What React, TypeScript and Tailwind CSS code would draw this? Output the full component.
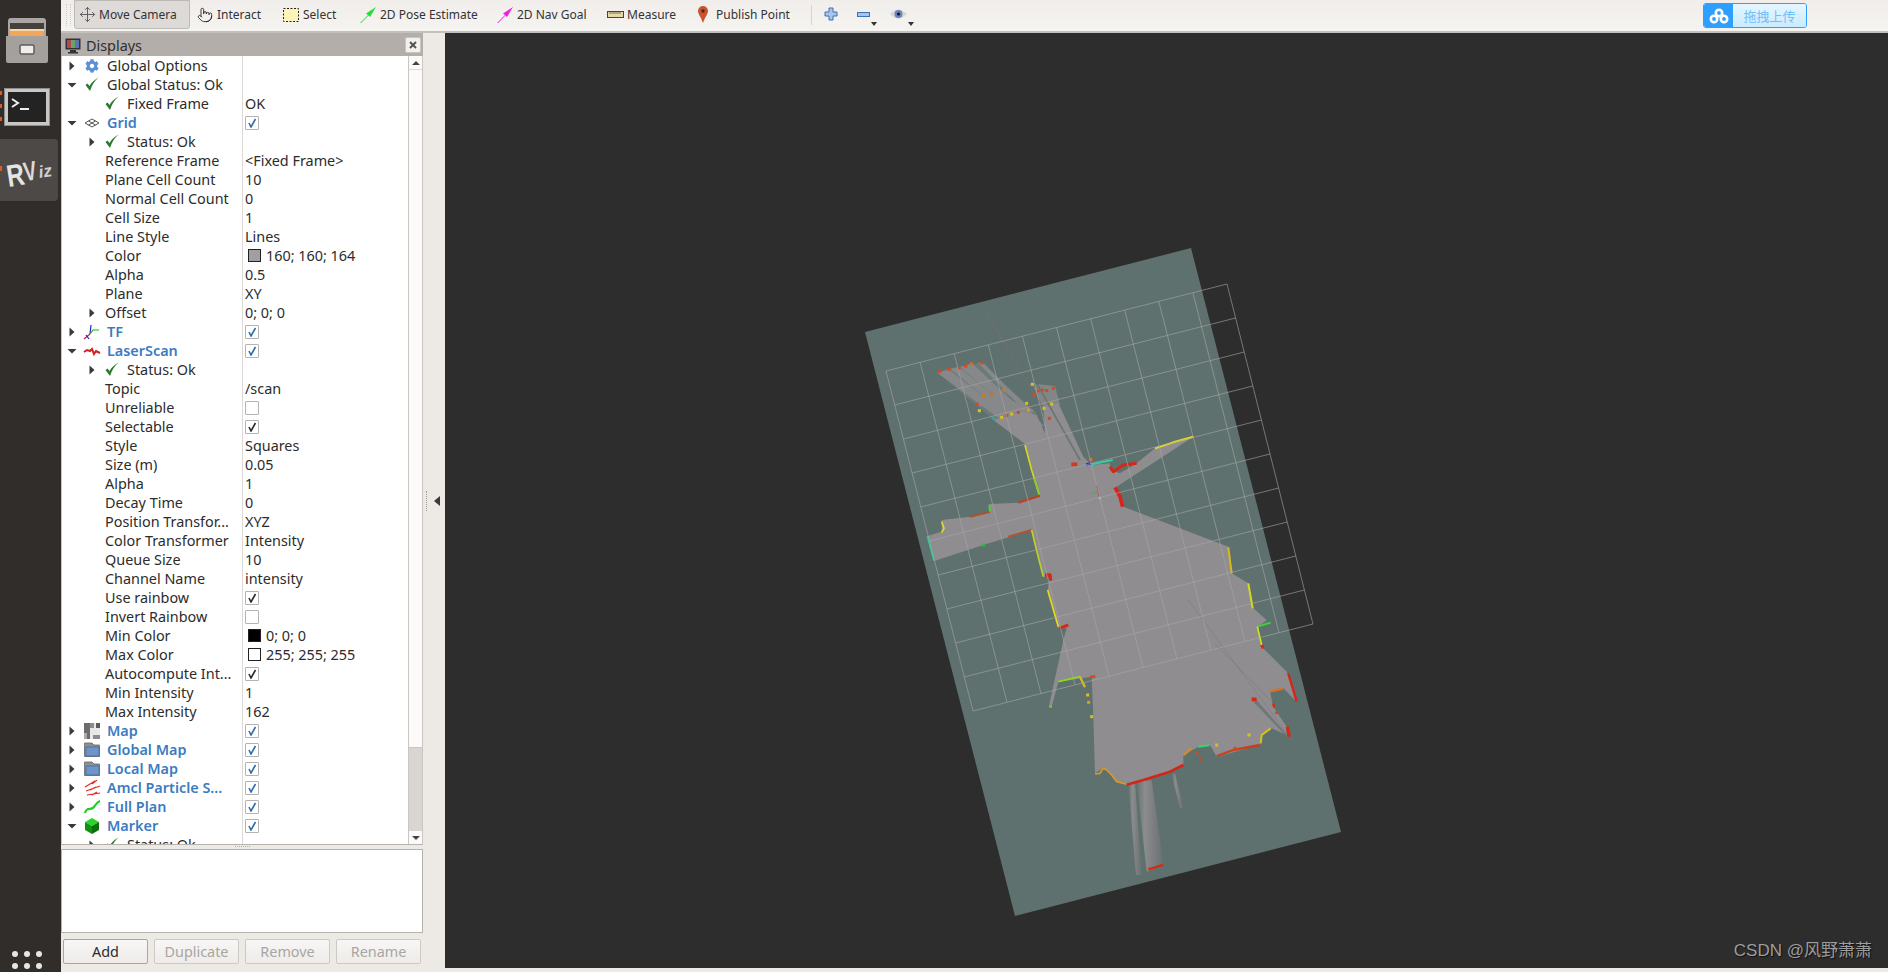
import React from "react";
import { Pointer, Move } from "lucide-react";
import { FaCog } from "react-icons/fa";

type RowData = {
    name: string;
    value?: string;
    level?: number;
    arrow?: "right" | "down";
    icon?: string;
    bold?: boolean;
    check?: "blue" | "dark" | "off";
    swatch?: string;
};

const rows: RowData[] = [
    { name: "Global Options", arrow: "right", icon: "gear" },
    { name: "Global Status: Ok", arrow: "down", icon: "ok" },
    { name: "Fixed Frame", value: "OK", level: 1, icon: "ok" },
    { name: "Grid", arrow: "down", icon: "grid", bold: true, check: "blue" },
    { name: "Status: Ok", level: 1, arrow: "right", icon: "ok" },
    { name: "Reference Frame", value: "<Fixed Frame>", level: 2 },
    { name: "Plane Cell Count", value: "10", level: 2 },
    { name: "Normal Cell Count", value: "0", level: 2 },
    { name: "Cell Size", value: "1", level: 2 },
    { name: "Line Style", value: "Lines", level: 2 },
    { name: "Color", value: "160; 160; 164", level: 2, swatch: "bg-[#a0a0a4]" },
    { name: "Alpha", value: "0.5", level: 2 },
    { name: "Plane", value: "XY", level: 2 },
    { name: "Offset", value: "0; 0; 0", level: 2, arrow: "right" },
    { name: "TF", arrow: "right", icon: "tf", bold: true, check: "blue" },
    { name: "LaserScan", arrow: "down", icon: "laser", bold: true, check: "blue" },
    { name: "Status: Ok", level: 1, arrow: "right", icon: "ok" },
    { name: "Topic", value: "/scan", level: 2 },
    { name: "Unreliable", level: 2, check: "off" },
    { name: "Selectable", level: 2, check: "dark" },
    { name: "Style", value: "Squares", level: 2 },
    { name: "Size (m)", value: "0.05", level: 2 },
    { name: "Alpha", value: "1", level: 2 },
    { name: "Decay Time", value: "0", level: 2 },
    { name: "Position Transfor...", value: "XYZ", level: 2 },
    { name: "Color Transformer", value: "Intensity", level: 2 },
    { name: "Queue Size", value: "10", level: 2 },
    { name: "Channel Name", value: "intensity", level: 2 },
    { name: "Use rainbow", level: 2, check: "dark" },
    { name: "Invert Rainbow", level: 2, check: "off" },
    { name: "Min Color", value: "0; 0; 0", level: 2, swatch: "bg-black" },
    { name: "Max Color", value: "255; 255; 255", level: 2, swatch: "bg-white" },
    { name: "Autocompute Int...", level: 2, check: "dark" },
    { name: "Min Intensity", value: "1", level: 2 },
    { name: "Max Intensity", value: "162", level: 2 },
    { name: "Map", arrow: "right", icon: "map", bold: true, check: "blue" },
    { name: "Global Map", arrow: "right", icon: "folder", bold: true, check: "blue" },
    { name: "Local Map", arrow: "right", icon: "folder", bold: true, check: "blue" },
    { name: "Amcl Particle S...", arrow: "right", icon: "amcl", bold: true, check: "blue" },
    { name: "Full Plan", arrow: "right", icon: "plan", bold: true, check: "blue" },
    { name: "Marker", arrow: "down", icon: "marker", bold: true, check: "blue" },
    { name: "Status: Ok", level: 1, arrow: "right", icon: "ok" },
];

function Arrow({ dir }: { dir: "right" | "down" }) {
    return (
        <svg width="10" height="10" viewBox="0 0 10 10">
            {dir === "right" ? (
                <path d="M2.5 0.5 L7.5 5 L2.5 9.5 Z" fill="#3b3a39" />
            ) : (
                <path d="M0.5 3 L9.5 3 L5 7.5 Z" fill="#3b3a39" />
            )}
        </svg>
    );
}

function RowIcon({ name }: { name: string }) {
    if (name === "gear") return <FaCog size={14} color="#5b8fd6" />;
    if (name === "ok")
        return (
            <svg width="16" height="15" viewBox="0 0 16 15">
                <path d="M1.5 8 L3.5 6.5 L5.5 9 C7.5 5.5 10 3 14.5 0.5 C10.5 4 8 8 6 14 Z" fill="#2c7a2c" />
            </svg>
        );
    if (name === "grid")
        return (
            <svg width="16" height="12" viewBox="0 0 16 12" fill="none" stroke="#555" strokeWidth="1">
                <path d="M1 6 L8 2 L15 6 L8 10 Z M4.5 4 L11.5 8 M11.5 4 L4.5 8" />
            </svg>
        );
    if (name === "tf")
        return (
            <svg width="18" height="16" viewBox="0 0 18 16" fill="none" strokeWidth="1.2">
                <path d="M7 10 L1 15" stroke="#e02020" />
                <path d="M7 10 L8 1" stroke="#2020d0" />
                <path d="M7 10 L10 6 L16 6" stroke="#20b020" />
                <path d="M3 11 L6 15" stroke="#2020d0" />
            </svg>
        );
    if (name === "laser")
        return (
            <svg width="18" height="12" viewBox="0 0 18 12" fill="none">
                <path d="M1 7 L4 5 L7 6 L9 4 L11 9 L13 6 L17 8" stroke="#d81f1f" strokeWidth="2" />
            </svg>
        );
    if (name === "map")
        return (
            <svg width="16" height="16" viewBox="0 0 16 16">
                <rect width="16" height="16" fill="#e8e8e8" />
                <rect width="6" height="16" fill="#6d6d6d" />
                <rect x="6" width="4" height="5" fill="#8c8c8c" />
                <rect x="12" width="4" height="5" fill="#5c5c5c" />
                <rect x="0" y="10" width="3" height="6" fill="#aaa" />
                <rect x="9" y="12" width="7" height="4" fill="#8c8c8c" />
            </svg>
        );
    if (name === "folder")
        return (
            <svg width="16" height="15" viewBox="0 0 16 15">
                <path d="M0.5 1 H8 L10 3 H15.5 V14.5 H0.5 Z" fill="#8f8f8f" stroke="#666" strokeWidth="0.8" />
                <rect x="2" y="5" width="13" height="9" fill="#6f94c9" stroke="#47699c" strokeWidth="0.8" />
            </svg>
        );
    if (name === "amcl")
        return (
            <svg width="17" height="16" viewBox="0 0 17 16" fill="none" stroke="#e4281e" strokeWidth="1.2">
                <path d="M1 7 L11 1 M13 0 L8 4" />
                <path d="M2 11 L16 6 M6 10 L12 7" />
                <path d="M3 15 L16 13 M8 15 L13 12" />
            </svg>
        );
    if (name === "plan")
        return (
            <svg width="17" height="14" viewBox="0 0 17 14" fill="none">
                <path d="M1 13 C3 6 7 11 10 7 C12 4 13 2 16 1" stroke="#1fce1f" strokeWidth="2.2" />
            </svg>
        );
    if (name === "marker")
        return (
            <svg width="16" height="16" viewBox="0 0 16 16">
                <path d="M8 0 L15 4 L8 8 L1 4 Z" fill="#27d627" />
                <path d="M1 4 L8 8 V16 L1 12 Z" fill="#129012" />
                <path d="M15 4 L8 8 V16 L15 12 Z" fill="#0b6f0b" />
            </svg>
        );
    return null;
}

function Checkbox({ kind }: { kind: "blue" | "dark" | "off" }) {
    return (
        <div className="w-[14px] h-[14px] border border-[#b5b3b0] rounded-[1px] bg-white flex items-center justify-center">
            {kind !== "off" && (
                <svg width="10" height="10" viewBox="0 0 10 10" fill="none">
                    <path
                        d="M2 5 L4 9 L8.5 1"
                        stroke={kind === "blue" ? "#2f6ca8" : "#2a2a2a"}
                        strokeWidth="1.6"
                    />
                </svg>
            )}
        </div>
    );
}

function TreeRow({ row }: { row: RowData }) {
    const level = row.level ?? 0;
    return (
        <div className="flex h-[19px] shrink-0">
            <div className="w-[181px] flex items-center shrink-0 overflow-hidden whitespace-nowrap border-r border-[#dcd9d6]">
                {level > 0 && <div className="w-[20px] shrink-0" />}
                {(level < 2 || row.arrow) && (
                    <div className="w-[19px] shrink-0 flex justify-center">
                        {row.arrow && <Arrow dir={row.arrow} />}
                    </div>
                )}
                {level === 2 && !row.arrow && <div className="w-[23px] shrink-0" />}
                {level === 2 && row.arrow && <div className="w-[4px] shrink-0" />}
                {row.icon && (
                    <div className="w-[22px] shrink-0 flex justify-center">
                        <RowIcon name={row.icon} />
                    </div>
                )}
                <span
                    className={
                        row.bold
                            ? "text-[#3b7cc0] font-semibold"
                            : "text-[#2c2c2c]"
                    }
                    style={{ marginLeft: row.icon ? 4 : 0 }}
                >
                    {row.name}
                </span>
            </div>
            <div className="flex items-center pl-[2px] text-[#2c2c2c] whitespace-nowrap">
                {row.check && <Checkbox kind={row.check} />}
                {row.swatch && (
                    <div className={"w-[13px] h-[13px] border border-[#222] ml-[3px] mr-[5px] " + row.swatch} />
                )}
                {row.value}
            </div>
        </div>
    );
}

function ToolItem({ icon, label, className }: { icon: React.ReactNode; label: string; className: string }) {
    return (
        <div className={"flex items-center shrink-0 h-[29px] text-[12px] text-[#333] whitespace-nowrap " + className}>
            {icon}
            <span>{label}</span>
        </div>
    );
}

function Launcher() {
    return (
        <div className="w-[61px] shrink-0 bg-[#302d2b] flex flex-col items-start relative">
            <svg width="44" height="46" viewBox="0 0 44 46" className="mt-[18px] ml-[5px]">
                <path d="M3 3 Q3 0 6 0 H38 Q41 0 41 3 V20 H3 Z" fill="#a9a6a3" />
                <rect x="5" y="5" width="34" height="13" fill="#45403c" />
                <rect x="5" y="11" width="34" height="7" fill="#f2a65a" />
                <rect x="5" y="11" width="34" height="2" fill="#f7d7a8" />
                <path d="M1 18 H43 V43 Q43 45 41 45 H3 Q1 45 1 43 Z" fill="#a4a09d" />
                <rect x="15" y="27" width="14" height="9" rx="1.5" fill="#efeeec" stroke="#5f5c5a" strokeWidth="1.5" />
            </svg>
            <svg width="46" height="38" viewBox="0 0 46 38" className="mt-[24px] ml-[4px]">
                <rect x="0.5" y="0.5" width="45" height="37" fill="#c9c7c5" stroke="#8f8c8a" />
                <rect x="4" y="4" width="38" height="30" fill="#232323" />
                <path d="M8 11 L14 15 L8 19" stroke="#eee" strokeWidth="2" fill="none" />
                <rect x="16" y="20" width="9" height="2" fill="#eee" />
            </svg>
            <div className="w-[58px] h-[62px] mt-[13px] bg-[#4c4947] rounded-r-[4px] flex items-center">
                <svg width="54" height="44" viewBox="0 0 54 44">
                    <g transform="rotate(-9 26 21)">
                        <text x="0" y="0" fontFamily="Liberation Sans, sans-serif" fontWeight="700" fontSize="31" fill="#e6e4e2" transform="translate(6 36) scale(0.78 1)">R</text>
                        <text x="0" y="0" fontFamily="Liberation Sans, sans-serif" fontWeight="700" fontSize="27" fill="#dcdad8" transform="translate(23 33) scale(0.72 1)">V</text>
                        <text x="0" y="0" fontFamily="Liberation Sans, sans-serif" fontWeight="700" fontStyle="italic" fontSize="17" fill="#d2d0ce" transform="translate(38 32)">iz</text>
                    </g>
                </svg>
            </div>
            <div className="absolute left-0 top-[91px] flex flex-col gap-[9px]">
                <div className="w-[2px] h-[4px] bg-[#e0592a]" />
                <div className="w-[2px] h-[4px] bg-[#e0592a]" />
                <div className="w-[2px] h-[4px] bg-[#e0592a]" />
            </div>
            <div className="absolute left-0 top-[166px] w-[2px] h-[5px] bg-[#e0592a]" />
            <div className="mt-auto mb-[3px] ml-[12px] grid grid-cols-3 gap-x-[6px] gap-y-[6px]">
                {[0, 1, 2, 3, 4, 5].map((i) => (
                    <div key={i} className="w-[6px] h-[6px] rounded-full bg-[#e8e6e3]" />
                ))}
            </div>
        </div>
    );
}

function Toolbar() {
    return (
        <div className="h-[33px] shrink-0 flex items-start border-b-2 border-[#c4c0bc] bg-gradient-to-b from-[#f0edea] to-[#f6f4f1]">
            <div className="w-[5px] h-[22px] ml-[5px] mt-[4px] mr-[3px] shrink-0 border-x border-dotted border-[#cfccc8]" />
            <ToolItem
                className="w-[116px] bg-[#dedad7] border border-[#bdb9b5] rounded-b-[3px] pl-[4px] gap-[3px]"
                icon={<Move size={17} color="#555" strokeWidth={1.3} />}
                label="Move Camera"
            />
            <ToolItem
                className="ml-[7px] w-[70px] gap-[4px]"
                icon={<Pointer size={16} color="#222" strokeWidth={1.3} />}
                label="Interact"
            />
            <ToolItem
                className="ml-[16px] w-[60px] gap-[4px]"
                icon={
                    <svg width="16" height="14" viewBox="0 0 16 14">
                        <rect x="0.5" y="0.5" width="15" height="13" fill="#fdf4b8" stroke="#222" strokeDasharray="2 1.5" />
                    </svg>
                }
                label="Select"
            />
            <ToolItem
                className="ml-[17px] w-[119px] gap-[4px]"
                icon={
                    <svg width="16" height="16" viewBox="0 0 16 16">
                        <path d="M0 16 L8 8 L6 6.5 L16 0 L10 10 L8.5 8.5 L1 16 Z" fill="#22e03a" />
                    </svg>
                }
                label="2D Pose Estimate"
            />
            <ToolItem
                className="ml-[18px] w-[93px] gap-[4px]"
                icon={
                    <svg width="16" height="16" viewBox="0 0 16 16">
                        <path d="M0 16 L8 8 L6 6.5 L16 0 L10 10 L8.5 8.5 L1 16 Z" fill="#f01ee0" />
                    </svg>
                }
                label="2D Nav Goal"
            />
            <ToolItem
                className="ml-[17px] w-[75px] gap-[3px]"
                icon={
                    <svg width="17" height="7" viewBox="0 0 17 7">
                        <rect x="0.5" y="0.5" width="16" height="6" fill="#e6d9a6" stroke="#444" />
                        <path d="M3 1 V3 M5 1 V3 M7 1 V3 M9 1 V3 M11 1 V3 M13 1 V3" stroke="#444" strokeWidth="0.7" />
                    </svg>
                }
                label="Measure"
            />
            <ToolItem
                className="ml-[16px] w-[92px] gap-[8px]"
                icon={
                    <svg width="10" height="17" viewBox="0 0 10 17">
                        <path d="M5 17 C3 11 0 8 0 5 A5 5 0 0 1 10 5 C10 8 7 11 5 17 Z" fill="#c9542e" />
                        <circle cx="5" cy="5" r="1.7" fill="#4a2a1c" />
                    </svg>
                }
                label="Publish Point"
            />
            <div className="w-px h-[20px] bg-[#d8d5d1] ml-[21px] mt-[5px] shrink-0" />
            <svg width="14" height="14" viewBox="0 0 14 14" className="ml-[12px] mt-[7px] shrink-0">
                <path d="M5 1 H9 V5 H13 V9 H9 V13 H5 V9 H1 V5 H5 Z" fill="#a9c4e8" stroke="#3d70b5" />
            </svg>
            <svg width="13" height="5" viewBox="0 0 13 5" className="ml-[19px] mt-[12px] shrink-0">
                <rect x="0.5" y="0.5" width="12" height="4" fill="#a9c4e8" stroke="#3d70b5" />
            </svg>
            <svg width="6" height="4" viewBox="0 0 6 4" className="ml-[1px] mt-[22px] shrink-0">
                <path d="M0 0 H6 L3 4 Z" fill="#333" />
            </svg>
            <svg width="17" height="12" viewBox="0 0 17 12" className="ml-[13px] mt-[8px] shrink-0">
                <path d="M0 6 Q8 -3 17 6 Q8 15 0 6 Z" fill="#d8d8d8" />
                <circle cx="8.5" cy="6" r="4" fill="#6a82bd" />
                <circle cx="8.5" cy="6" r="1.5" fill="#111" />
            </svg>
            <svg width="6" height="4" viewBox="0 0 6 4" className="ml-[1px] mt-[22px] shrink-0">
                <path d="M0 0 H6 L3 4 Z" fill="#333" />
            </svg>
            <div className="ml-[789px] mt-[3px] w-[104px] h-[25px] flex shrink-0 rounded-[3px] border border-[#2f9fff] overflow-hidden">
                <div className="w-[29px] bg-[#2f9fff] flex items-center justify-center">
                    <svg width="20" height="16" viewBox="0 0 20 16" fill="none" stroke="#fff" strokeWidth="2.6">
                        <circle cx="10" cy="5" r="3.2" />
                        <circle cx="5" cy="11" r="3.2" />
                        <circle cx="15" cy="11" r="3.2" />
                    </svg>
                </div>
                <div className="flex-1 bg-gradient-to-b from-[#e6f6ff] to-[#c9ebff] text-[#74bdf7] text-[13px] flex items-center justify-center font-['Noto_Sans_CJK_SC',sans-serif]">
                    拖拽上传
                </div>
            </div>
        </div>
    );
}

function DisplaysPanel() {
    const buttons = [
        { label: "Add", on: true },
        { label: "Duplicate", on: false },
        { label: "Remove", on: false },
        { label: "Rename", on: false },
    ];
    return (
        <div className="w-[362px] shrink-0 flex flex-col">
            <div className="h-[23px] shrink-0 bg-[#b3aeaa] flex items-center pl-[4px] pt-[2px] text-[#2e2e2e]">
                <svg width="16" height="16" viewBox="0 0 16 16" className="mr-[5px]">
                    <rect x="0.5" y="0.5" width="15" height="11" fill="#333" />
                    <rect x="2" y="2" width="4" height="8" fill="#b34a4a" />
                    <rect x="6" y="2" width="4" height="8" fill="#6aa36a" />
                    <rect x="10" y="2" width="4" height="8" fill="#5a74b5" />
                    <rect x="5" y="12" width="6" height="2" fill="#333" />
                    <rect x="3" y="14" width="10" height="1.5" fill="#333" />
                </svg>
                Displays
                <div className="ml-auto mr-[2px] w-[16px] h-[16px] mb-[2px] border border-[#c9c6c2] rounded-[2px] bg-[#f3f1ee] flex items-center justify-center">
                    <svg width="8" height="8" viewBox="0 0 8 8" stroke="#555" strokeWidth="2">
                        <path d="M1 1 L7 7 M7 1 L1 7" />
                    </svg>
                </div>
            </div>
            <div className="h-[789px] shrink-0 flex bg-white border-b border-[#b5b2ae] overflow-hidden">
                <div className="flex-1 flex flex-col overflow-hidden border-l border-[#c9c6c2]">
                    {rows.map((row, i) => (
                        <TreeRow key={i} row={row} />
                    ))}
                </div>
                <div className="w-[15px] shrink-0 flex flex-col bg-[#fbfaf8] border-x border-[#c9c6c2]">
                    <div className="h-[14px] flex items-center justify-center border-b border-[#dcd9d6]">
                        <svg width="8" height="4" viewBox="0 0 8 4"><path d="M0 4 H8 L4 0 Z" fill="#444" /></svg>
                    </div>
                    <div className="flex-1" />
                    <div className="h-[84px] bg-[#d8d5d2] border-t border-[#c9c6c2]" />
                    <div className="h-[13px] flex items-center justify-center">
                        <svg width="8" height="4" viewBox="0 0 8 4"><path d="M0 0 H8 L4 4 Z" fill="#444" /></svg>
                    </div>
                </div>
            </div>
            <div className="h-[4px] shrink-0 flex justify-center">
                <div className="w-[15px] h-px mt-[1px] border-t border-dotted border-[#b5b2ae]" />
            </div>
            <div className="h-[84px] shrink-0 bg-white border border-[#b5b2ae]" />
            <div className="flex gap-[6px] pl-[2px] mt-[6px]">
                {buttons.map((b) => (
                    <div
                        key={b.label}
                        className={
                            "w-[85px] h-[25px] flex items-center justify-center rounded-[2px] border bg-gradient-to-b from-[#f8f7f5] to-[#eeebe8] " +
                            (b.on ? "border-[#a9a6a2] text-[#2c2c2c]" : "border-[#cdcac6] text-[#a8a5a2]")
                        }
                    >
                        {b.label}
                    </div>
                ))}
            </div>
        </div>
    );
}

const gridLines = Array.from({ length: 11 }, (_, i) => {
    const t = i / 10;
    return {
        a: [886 + 341 * t, 371 - 87 * t, 973 + 340 * t, 711 - 87 * t],
        b: [886 + 87 * t, 371 + 340 * t, 1227 + 86 * t, 284 + 340 * t],
    };
});

const freeSpace =
    "525,642 470,600 430,570 520,545 560,555 585,610 580,530 625,520 700,680 725,705 780,700 780,720 810,730 860,700 915,655 1030,620 800,770 805,800 820,830 1135,950 1145,1030 1195,1060 1210,1135 1250,1170 1225,1190 1235,1250 1310,1325 1340,1415 1300,1375 1260,1385 1270,1430 1310,1490 1310,1515 1265,1495 1235,1515 1230,1545 1100,1580 1080,1545 1045,1550 1000,1575 1000,1605 960,1625 830,1665 800,1655 780,1630 760,1615 735,1630 730,1460 725,1340 695,1345 625,1355 605,1430 597,1428 640,1230 650,1195 625,1195 593,1080 600,1040 580,1040 545,900 480,920 400,945 255,992 232,918 275,905 275,870 360,860 420,845 418,822 505,818 570,797";

// far scan fan: a faint wedge, with the denser stripes laid over it
const fanWedge = "262,428 395,397 560,550 530,570 430,570 385,530";
const fanRays = [
    "262,428 295,418 530,600 500,605",
    "300,416 326,410 545,590 525,600",
    "330,410 366,400 565,585 540,590",
    "382,396 404,402 585,590 565,585",
    "385,525 400,500 540,560 520,570",
    "400,497 432,490 552,540 535,555",
    "452,478 478,478 562,555 548,545",
    "548,465 575,490 620,560 590,560",
    "555,462 615,468 630,525 578,530",
];

const scanLines: [string, string, number][] = [
    ["525,645 545,720 568,795", "#d6d820", 5],
    ["552,745 568,795", "#7ccf28", 5],
    ["505,818 570,797", "#b5452a", 7],
    ["360,860 420,845", "#a9522f", 6],
    ["418,825 420,845", "#4fce3a", 6],
    ["275,875 282,895 275,908", "#e0dc1c", 5],
    ["232,918 252,992", "#2fc98f", 5],
    ["475,920 545,900", "#b5532a", 6],
    ["545,900 562,970 580,1040", "#bfd224", 5],
    ["585,1035 600,1035 602,1052", "#d52a14", 10],
    ["593,1080 625,1190", "#e2dc1c", 5],
    ["628,1195 655,1185", "#d52a14", 9],
    ["725,703 788,690", "#2fcfa0", 6],
    ["664,703 682,703", "#d8381a", 11],
    ["708,703 722,700", "#2a2ac8", 7],
    ["780,710 790,725 820,705 860,700", "#d5281a", 9],
    ["915,655 970,637 1030,620", "#e4dc1c", 6],
    ["795,772 810,800 818,830", "#d8241a", 11],
    ["1135,952 1145,1030", "#d8b81e", 6],
    ["1195,1060 1208,1135", "#d6d820", 6],
    ["1222,1190 1262,1178", "#38d82c", 6],
    ["1222,1190 1235,1245", "#cfe020", 5],
    ["1235,1245 1240,1255", "#d52a14", 9],
    ["1315,1330 1340,1415", "#d8241a", 7],
    ["1260,1385 1300,1375", "#d8702a", 7],
    ["1205,1408 1220,1408", "#d52a14", 11],
    ["1270,1420 1272,1432", "#d52a14", 7],
    ["1312,1490 1318,1520", "#d52a14", 10],
    ["1262,1495 1235,1515 1232,1540", "#d8c020", 6],
    ["1100,1578 1150,1560 1230,1545", "#c9401f", 7],
    ["1045,1550 1078,1546", "#2fd86a", 6],
    ["1000,1575 1025,1555", "#d88a24", 7],
    ["830,1664 880,1650 960,1625 1000,1605", "#d4241a", 8],
    ["735,1632 750,1630 760,1615 770,1620 785,1635 800,1655 828,1662", "#d89a24", 5],
    ["625,1355 690,1340", "#8cd81e", 5],
    ["690,1340 705,1372", "#d8b81e", 7],
    ["720,1340 736,1340", "#d8481e", 8],
    ["597,1430 606,1430", "#7cc81e", 6],
    ["895,1918 940,1905", "#d52a14", 7],
];

const dots: [number, number, string][] = [
    [270, 425, "#d8481e"], [297, 418, "#d8481e"], [327, 415, "#d8481e"], [347, 408, "#d8481e"], [365, 402, "#d8701e"],
    [395, 398, "#d8481e"], [400, 497, "#c97a2a"], [425, 492, "#c9702a"], [462, 480, "#c97a2a"], [382, 523, "#d8481e"],
    [388, 542, "#d8c81e"], [430, 565, "#2aa8a0"], [455, 562, "#d8c020"], [470, 557, "#d8481e"], [485, 552, "#d8c020"],
    [505, 547, "#d8481e"], [530, 520, "#d8c020"], [535, 540, "#d8a020"], [547, 463, "#d8c020"], [552, 495, "#d8481e"],
    [565, 483, "#d8481e"], [578, 480, "#d8481e"], [590, 482, "#d8481e"], [610, 475, "#d8481e"], [582, 535, "#d8c020"],
    [605, 522, "#d8c020"], [598, 565, "#d8481e"], [723, 688, "#d8701e"], [400, 945, "#2fb84a"], [713, 1395, "#d8c020"],
    [716, 1417, "#d8a020"], [725, 1460, "#d8c020"], [1197, 1515, "#d8c020"], [1100, 1545, "#d8c020"], [1052, 1590, "#d8481e"],
    [1280, 1448, "#d8481e"], [1040, 1570, "#d8481e"], [1155, 1555, "#d8481e"],
];

function Scene() {
    return (
        <svg viewBox="445 33 1443 935" className="w-full h-full block blur-[0.5px]">
            <defs>
                <linearGradient id="streak" x1="0" y1="0" x2="1" y2="0">
                    <stop offset="0" stopColor="#667270" />
                    <stop offset="0.3" stopColor="#8b8c8e" />
                    <stop offset="0.75" stopColor="#76797b" />
                    <stop offset="1" stopColor="#677270" />
                </linearGradient>
            </defs>
            <polygon points="865,332 1191,248 1341,832 1015,916" fill="#5f716e" />
            <g transform="translate(850 230) scale(0.33333)">
                <polygon points={fanWedge} fill="#8f8d90" opacity="0.3" />
                <g fill="#8f8d90" opacity="0.75">
                    {fanRays.map((p) => (
                        <polygon key={p} points={p} />
                    ))}
                </g>
                <path d="M405 240 L520 440 L600 560" stroke="#7b6f6e" strokeWidth="3" fill="none" opacity="0.7" />
                <polygon points={freeSpace} fill="#8f8d90" />
                <path d="M560 460 L690 690" stroke="#5f716e" strokeWidth="5" opacity="0.8" />
                <polygon points="835,1660 855,1655 875,1935 858,1935" fill="url(#streak)" />
                <polygon points="860,1655 905,1650 940,1905 890,1925" fill="url(#streak)" />
                <polygon points="965,1635 975,1630 1000,1735 990,1735" fill="url(#streak)" />
                <path d="M1015,1110 L1310,1510 M1095,1240 L1270,1420" stroke="#75767a" strokeWidth="3" fill="none" opacity="0.45" />
                <polygon points="1205,1410 1220,1410 1312,1515 1300,1510" fill="#70787a" />
                {scanLines.map(([p, c, w], i) => (
                    <polyline key={i} points={p} fill="none" stroke={c} strokeWidth={w} strokeLinejoin="round" />
                ))}
                {dots.map(([x, y, c], i) => (
                    <rect key={i} x={x - 4.5} y={y - 4.5} width="9" height="9" fill={c} />
                ))}
                <path d="M740 765 L747 800" stroke="#c8303a" strokeWidth="3" />
                <path d="M725 790 L742 786 M730 810 L745 805" stroke="#3ca84a" strokeWidth="3" strokeDasharray="4 2" />
                <circle cx="749" cy="804" r="4" fill="#b8b4e0" />
            </g>
            <g stroke="#a6a9a9" strokeOpacity="0.6" strokeWidth="1" fill="none">
                {gridLines.map((l, i) => (
                    <g key={i}>
                        <line x1={l.a[0]} y1={l.a[1]} x2={l.a[2]} y2={l.a[3]} />
                        <line x1={l.b[0]} y1={l.b[1]} x2={l.b[2]} y2={l.b[3]} />
                    </g>
                ))}
            </g>
        </svg>
    );
}

export default function App() {
    return (
        <div className="w-[1888px] h-[972px] flex overflow-hidden bg-[#edeae6] text-[14.4px] font-['Noto_Sans',sans-serif]">
            <Launcher />
            <div className="flex-1 flex flex-col min-w-0">
                <Toolbar />
                <div className="flex-1 flex min-h-0">
                    <DisplaysPanel />
                    <div className="w-[22px] shrink-0 flex items-center pb-[3px]">
                        <div className="w-[3px] h-[20px] ml-[3px] border-l border-dotted border-[#a09d9a]" />
                        <svg width="6" height="10" viewBox="0 0 6 10" className="ml-[5px]">
                            <path d="M6 0 V10 L0 5 Z" fill="#3b3a39" />
                        </svg>
                    </div>
                    <div className="flex-1 flex flex-col min-w-0">
                        <div className="h-[935px] shrink-0 bg-[#2d2d2d] relative">
                            <Scene />
                            <div className="absolute right-[16px] bottom-[5px] text-[17px] text-[#9d9d9d] whitespace-nowrap font-['Liberation_Sans','Noto_Sans_CJK_SC',sans-serif] [text-shadow:1px_1px_1px_#111]">
                                CSDN @风野萧萧
                            </div>
                        </div>
                    </div>
                </div>
            </div>
        </div>
    );
}
